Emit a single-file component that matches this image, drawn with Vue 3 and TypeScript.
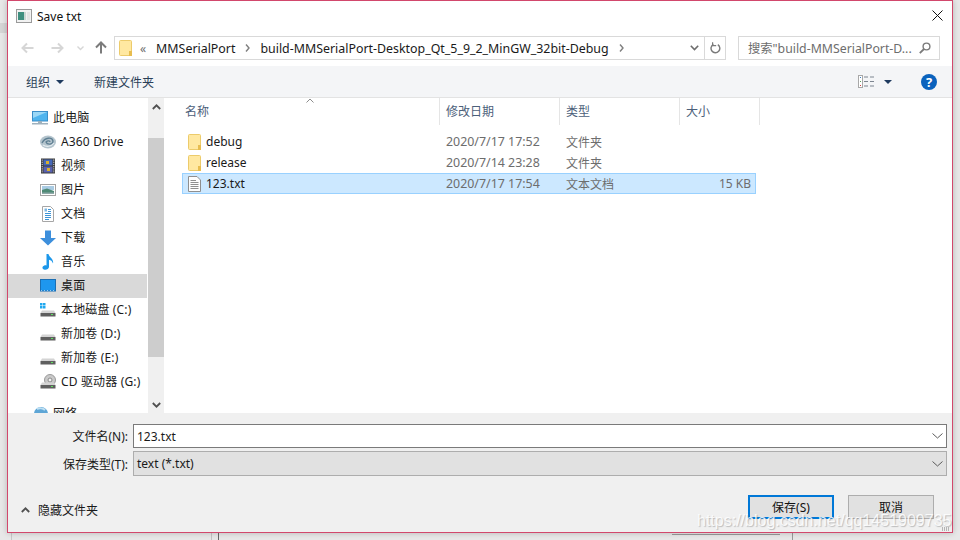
<template>
  <div class="desktop">
    <div class="behind-mark"></div>
    <div class="behind-line l1"></div>
    <div class="behind-line l2"></div>
    <div class="behind-line l3"></div>
    <div class="behind-line l4"></div>
    <div class="behind-box"></div>

    <div class="dialog">
      <div class="titlebar">
        <svg class="app-icon" width="16" height="14" viewBox="0 0 16 14">
          <rect x="0.5" y="0.5" width="15" height="13" fill="#f2f2f2" stroke="#9a9a9a" />
          <rect x="2" y="3" width="6" height="8" fill="#3f8f7f" />
          <rect x="8" y="3" width="2" height="8" fill="#c9d6d2" />
          <rect x="11" y="3" width="3" height="8" fill="#e4e4e4" />
        </svg>
        <span class="title">Save txt</span>
        <svg class="close" width="11" height="11" viewBox="0 0 11 11">
          <path d="M0.5 0.5L10.5 10.5M10.5 0.5L0.5 10.5" stroke="#111" stroke-width="1" fill="none" />
        </svg>
      </div>

      <div class="navrow">
        <svg class="nav-arrow" width="13" height="12" viewBox="0 0 13 12">
          <path d="M12.5 6H1.5M6 1.5L1.5 6L6 10.5" stroke="#d6d6d6" stroke-width="2" fill="none" />
        </svg>
        <svg class="nav-arrow fwd" width="13" height="12" viewBox="0 0 13 12">
          <path d="M0.5 6H11.5M7 1.5L11.5 6L7 10.5" stroke="#d6d6d6" stroke-width="2" fill="none" />
        </svg>
        <svg class="nav-small" width="7" height="5" viewBox="0 0 7 5">
          <path d="M0.5 0.5L3.5 3.5L6.5 0.5" stroke="#d6d6d6" stroke-width="1.4" fill="none" />
        </svg>
        <svg class="nav-up" width="12" height="13" viewBox="0 0 12 13">
          <path d="M6 12.5V2M1 6.5L6 1.5L11 6.5" stroke="#7b7b7b" stroke-width="2" fill="none" />
        </svg>

        <div class="address">
          <svg class="addr-folder" width="13" height="16" viewBox="0 0 13 16">
            <path d="M0.5 1.5Q0.5 0.5 1.5 0.5H11.5Q12.5 0.5 12.5 1.5V15.5H1.5Q0.5 15.5 0.5 14.5Z" fill="#ffe8a1" stroke="#eccb6b" />
            <rect x="10" y="11" width="3" height="5" fill="#e8bd4f" />
          </svg>
          <span class="crumb-more">«</span>
          <span class="crumb first">MMSerialPort</span>
          <svg class="crumb-sep" width="5" height="8" viewBox="0 0 5 8">
            <path d="M1 0.5L4 4L1 7.5" stroke="#7f7f7f" stroke-width="1.4" fill="none" />
          </svg>
          <span class="crumb">build-MMSerialPort-Desktop_Qt_5_9_2_MinGW_32bit-Debug</span>
          <svg class="crumb-sep" width="5" height="8" viewBox="0 0 5 8">
            <path d="M1 0.5L4 4L1 7.5" stroke="#7f7f7f" stroke-width="1.4" fill="none" />
          </svg>
          <svg class="addr-drop" width="9" height="6" viewBox="0 0 9 6">
            <path d="M0.8 0.8L4.5 4.5L8.2 0.8" stroke="#6d6d6d" stroke-width="1.6" fill="none" />
          </svg>
          <div class="addr-refresh">
            <svg width="11" height="12" viewBox="0 0 11 12">
              <path d="M7.8 2.6A4.4 4.4 0 1 1 3.4 2.4" stroke="#7a7a7a" stroke-width="1.4" fill="none" />
              <path d="M2.6 0.2V3.6H6.2" stroke="#7a7a7a" stroke-width="1.2" fill="none" />
            </svg>
          </div>
        </div>

        <div class="search">
          <span class="search-text">搜索"build-MMSerialPort-D...</span>
          <svg width="12" height="12" viewBox="0 0 12 12">
            <circle cx="7.5" cy="4.5" r="3.4" stroke="#7a7a7a" stroke-width="1.4" fill="none" />
            <path d="M5 7L0.8 11.2" stroke="#7a7a7a" stroke-width="1.8" />
          </svg>
        </div>
      </div>

      <div class="toolbar">
        <span class="tool-text">组织</span>
        <span class="caret-down"></span>
        <span class="tool-text new-folder">新建文件夹</span>
        <svg class="views" width="17" height="13" viewBox="0 0 17 13">
          <rect x="0.5" y="0.5" width="4" height="12" fill="#fff" stroke="#a8a8a8" />
          <rect x="2" y="2" width="1" height="1" fill="#3d7fc4" />
          <rect x="2" y="6" width="1" height="1" fill="#5aa05a" />
          <rect x="2" y="10" width="1" height="1" fill="#d04040" />
          <path d="M6 2H10M12 2H16M6 6.5H10M12 6.5H16M6 11H10M12 11H16" stroke="#7d8590" stroke-width="1" />
        </svg>
        <span class="caret-down views-caret"></span>
        <span class="help">?</span>
      </div>

      <div class="main">
        <div class="sidebar">
          <div
            v-for="item in navItems"
            :key="item.label"
            class="nav-item"
            :class="{ selected: item.selected, top: item.top, group: item.icon === 'network' }"
          >
            <svg class="nav-icon" width="16" height="16" viewBox="0 0 16 16">
              <template v-if="item.icon === 'pc'">
                <rect x="0.5" y="1.5" width="15" height="9.5" fill="#4fb4ee" stroke="#3b8ec9" />
                <path d="M1 2H15L1 8Z" fill="#9bd8f7" />
                <rect x="6" y="11" width="4" height="2" fill="#9fb1bd" />
                <rect x="0" y="13" width="16" height="1.5" fill="#9fb1bd" />
              </template>
              <template v-else-if="item.icon === 'a360'">
                <ellipse cx="8" cy="8" rx="8" ry="6.5" fill="#b4c4cd" />
                <path d="M2 9C5 3 12 3 13 7C13 11 7 11 6 8C8 6 10 7 10 8" stroke="#5f7f92" stroke-width="1.3" fill="none" />
                <path d="M3 11C6 13 11 13 14 9" stroke="#e6edf1" stroke-width="1.2" fill="none" />
              </template>
              <template v-else-if="item.icon === 'video'">
                <rect x="1" y="0.5" width="14" height="15" fill="#3a3a3a" />
                <rect x="3.5" y="1.5" width="9" height="6" fill="#4668b8" />
                <rect x="3.5" y="8.5" width="9" height="6" fill="#5a62b0" />
                <rect x="6" y="3" width="3" height="3" fill="#d8b030" />
                <rect x="7" y="10" width="3" height="3" fill="#d8b030" />
                <path d="M2.2 1.5V15M13.8 1.5V15" stroke="#ddd" stroke-width="1" stroke-dasharray="1.2 1" />
              </template>
              <template v-else-if="item.icon === 'pictures'">
                <rect x="0.5" y="2.5" width="15" height="11" fill="#fff" stroke="#a3a3a3" />
                <rect x="2" y="4" width="12" height="4" fill="#a9cbe3" />
                <path d="M2 8L7 6.5L14 9V12H2Z" fill="#4f8a76" />
                <path d="M2 10.5H14V12H2Z" fill="#8fa9a8" />
              </template>
              <template v-else-if="item.icon === 'docs'">
                <path d="M2.5 0.5H10.5L13.5 3.5V15.5H2.5Z" fill="#fff" stroke="#a6a6a6" />
                <path d="M8 3.5H11M8 5.5H11M5 7.5H11M5 9.5H11M5 11.5H11M5 13.5H9" stroke="#3d94d6" stroke-width="1" />
                <rect x="4.5" y="2.5" width="2.5" height="3" fill="#7fb7e0" />
              </template>
              <template v-else-if="item.icon === 'download'">
                <path d="M5 0.5H11V8H16L8 15.5L0 8H5Z" fill="#3d8fdc" />
              </template>
              <template v-else-if="item.icon === 'music'">
                <path d="M6.5 0H8.5C9 3.5 14 4.5 13 9.5C12.2 7 10.8 6.3 9 5.8V13C9 15 6 16.3 4 15.6C1.8 14.800 2 12.3 4.300 11.500C5.200 11.200 5.900 11.300 6.500 11.500Z" fill="#1c97ea" />
              </template>
              <template v-else-if="item.icon === 'desktop'">
                <rect x="0.5" y="1.5" width="15" height="11.5" fill="#1e97ef" stroke="#1c6fb3" />
                <path d="M1 12.5H15" stroke="#b8dcf6" stroke-width="0.8" stroke-dasharray="1 2" />
              </template>
              <template v-else-if="item.icon === 'network'">
                <circle cx="9" cy="8" r="7" fill="#5ea6d6" />
                <path d="M5 3C7 2 11 2 13 4" stroke="#bfe0f3" stroke-width="2" fill="none" />
                <rect x="0" y="12" width="16" height="2" fill="#4f8fc0" />
              </template>
              <template v-else>
                <g v-if="item.icon === 'cd'">
                  <circle cx="10" cy="6" r="5.5" fill="#c9c9c9" stroke="#9a9a9a" />
                  <circle cx="10" cy="6" r="2" fill="#f2f2f2" stroke="#8a8a8a" />
                </g>
                <g v-if="item.icon === 'sys'">
                  <rect x="0" y="1" width="2.5" height="2.5" fill="#1fa8ef" />
                  <rect x="3" y="1" width="2.5" height="2.5" fill="#1fa8ef" />
                  <rect x="0" y="4" width="2.5" height="2.5" fill="#1fa8ef" />
                  <rect x="3" y="4" width="2.5" height="2.5" fill="#1fa8ef" />
                </g>
                <path d="M2 8.5H14L15.5 11H0.5Z" fill="#d4d4d4" />
                <rect x="0.5" y="11" width="15" height="3.5" fill="#5f5f5f" />
                <rect x="11" y="12" width="2" height="1" fill="#5fe05f" />
              </template>
            </svg>
            <span class="nav-label">{{ item.label }}</span>
          </div>
        </div>

        <div class="scrollbar">
          <div class="scroll-btn">
            <svg width="9" height="6" viewBox="0 0 9 6">
              <path d="M0.8 5L4.5 1.3L8.2 5" stroke="#505050" stroke-width="1.8" fill="none" />
            </svg>
          </div>
          <div class="scroll-track"><div class="scroll-thumb"></div></div>
          <div class="scroll-btn">
            <svg width="9" height="6" viewBox="0 0 9 6">
              <path d="M0.8 1L4.5 4.7L8.2 1" stroke="#505050" stroke-width="1.8" fill="none" />
            </svg>
          </div>
        </div>

        <div class="filepane">
          <div class="col-header">
            <div class="col c-name">
              名称
              <svg class="sort" width="8" height="5" viewBox="0 0 8 5">
                <path d="M0.5 4.5L4 1L7.5 4.5" stroke="#8c8c8c" stroke-width="1" fill="none" />
              </svg>
            </div>
            <div class="col c-date">修改日期</div>
            <div class="col c-type">类型</div>
            <div class="col c-size">大小</div>
          </div>
          <div class="rows">
            <div
              v-for="file in files"
              :key="file.name"
              class="row"
              :class="{ active: file.active }"
            >
              <div class="cell-name">
                <svg v-if="file.folder" width="13" height="16" viewBox="0 0 13 16">
                  <path d="M0.5 1.5Q0.5 0.5 1.5 0.5H11.5Q12.5 0.5 12.5 1.5V15.5H1.5Q0.5 15.5 0.5 14.5Z" fill="#ffe8a1" stroke="#eccb6b" />
                  <rect x="10" y="11" width="3" height="5" fill="#e8bd4f" />
                </svg>
                <svg v-else width="13" height="16" viewBox="0 0 13 16">
                  <path d="M0.5 0.5H9L12.5 4V15.5H0.5Z" fill="#fdfdfd" stroke="#8f8f8f" />
                  <path d="M2.5 4.5H8M2.5 6.5H10.5M2.5 8.5H10.5M2.5 10.5H10.5M2.5 12.5H10.5" stroke="#8f8f8f" stroke-width="1" />
                </svg>
                <span>{{ file.name }}</span>
              </div>
              <div class="cell-date">{{ file.date }}</div>
              <div class="cell-type">{{ file.type }}</div>
              <div class="cell-size">{{ file.size }}</div>
            </div>
          </div>
        </div>
      </div>

      <div class="bottom">
        <div class="field">
          <label class="field-label">文件名(N):</label>
          <div class="input">
            <span>123.txt</span>
            <svg width="11" height="6" viewBox="0 0 11 6">
              <path d="M0.5 0.5L5.5 5L10.5 0.5" stroke="#5a5a5a" stroke-width="1" fill="none" />
            </svg>
          </div>
        </div>
        <div class="field second">
          <label class="field-label">保存类型(T):</label>
          <div class="input select">
            <span>text (*.txt)</span>
            <svg width="11" height="6" viewBox="0 0 11 6">
              <path d="M0.5 0.5L5.5 5L10.5 0.5" stroke="#5a5a5a" stroke-width="1" fill="none" />
            </svg>
          </div>
        </div>
        <div class="actions">
          <svg class="hide-caret" width="9" height="6" viewBox="0 0 9 6">
            <path d="M0.8 5L4.5 1.3L8.2 5" stroke="#505050" stroke-width="1.8" fill="none" />
          </svg>
          <span class="hide-text">隐藏文件夹</span>
          <button class="btn primary">保存(S)</button>
          <button class="btn">取消</button>
        </div>
      </div>
    </div>

    <div class="watermark">https://blog.csdn.net/qq1451909735</div>
    <div class="watermark-dots"></div>
  </div>
</template>

<script setup lang="ts">
interface NavItem {
  label: string;
  icon: string;
  top?: boolean;
  selected?: boolean;
}

interface FileRow {
  name: string;
  date: string;
  type: string;
  size: string;
  folder: boolean;
  active?: boolean;
}

const navItems: NavItem[] = [
  { label: "此电脑", icon: "pc", top: true },
  { label: "A360 Drive", icon: "a360" },
  { label: "视频", icon: "video" },
  { label: "图片", icon: "pictures" },
  { label: "文档", icon: "docs" },
  { label: "下载", icon: "download" },
  { label: "音乐", icon: "music" },
  { label: "桌面", icon: "desktop", selected: true },
  { label: "本地磁盘 (C:)", icon: "sys" },
  { label: "新加卷 (D:)", icon: "drive" },
  { label: "新加卷 (E:)", icon: "drive" },
  { label: "CD 驱动器 (G:)", icon: "cd" },
  { label: "网络", icon: "network", top: true },
];

const files: FileRow[] = [
  { name: "debug", date: "2020/7/17 17:52", type: "文件夹", size: "", folder: true },
  { name: "release", date: "2020/7/14 23:28", type: "文件夹", size: "", folder: true },
  { name: "123.txt", date: "2020/7/17 17:54", type: "文本文档", size: "15 KB", folder: false, active: true },
];
</script>

<style>
html,
body {
  margin: 0;
  background: #e6e6e6;
}
</style>

<style scoped>
.desktop {
  position: relative;
  width: 960px;
  height: 540px;
  overflow: hidden;
  background: #e8e8e8;
  font-family: "Noto Sans", "Noto Sans CJK SC", sans-serif;
  font-size: 12px;
  color: #1a1a1a;
}

.behind-mark {
  position: absolute;
  left: 0;
  top: 23px;
  width: 7px;
  height: 10px;
  background: #d6d6d6;
}
.behind-line {
  position: absolute;
  top: 533px;
  width: 1px;
  height: 7px;
}
.l1 {
  left: 11px;
  background: #c8c8c8;
}
.l2 {
  left: 211px;
  background: #c4c4c4;
}
.l3 {
  left: 218px;
  background: #666;
}
.l4 {
  left: 792px;
  background: #9a9a9a;
}
.behind-box {
  position: absolute;
  left: 672px;
  top: 534px;
  width: 108px;
  height: 1px;
  background: #9a9a9a;
}

.dialog {
  position: absolute;
  left: 7px;
  top: 0;
  width: 944px;
  height: 531px;
  border: 1px solid #d2486c;
  background: #fff;
  display: flex;
  flex-direction: column;
  box-shadow: 0 0 6px rgba(0, 0, 0, 0.22);
}

.titlebar {
  height: 29px;
  display: flex;
  align-items: center;
  padding-left: 8px;
  flex-shrink: 0;
}
.title {
  margin-left: 5px;
  margin-top: 1px;
  color: #111;
  font-size: 12px;
}
.close {
  margin-left: auto;
  margin-right: 9px;
}

.navrow {
  height: 36px;
  flex-shrink: 0;
  display: flex;
  align-items: flex-start;
  padding-top: 6px;
  box-sizing: border-box;
}
.nav-arrow {
  margin: 6px 0 0 13px;
}
.nav-arrow.fwd {
  margin-left: 17px;
}
.nav-small {
  margin: 10px 0 0 13px;
}
.nav-up {
  margin: 5px 0 0 11px;
}
.address {
  margin-left: 7px;
  width: 610px;
  height: 22px;
  border: 1px solid #d9d9d9;
  display: flex;
  align-items: center;
  flex-shrink: 0;
}
.addr-folder {
  margin-left: 4px;
}
.crumb-more {
  margin-left: 8px;
  color: #6d6d6d;
}
.crumb {
  margin-left: 10px;
  font-size: 12.4px;
  white-space: nowrap;
}
.crumb-sep {
  margin-left: 10px;
}
.crumb-sep + .crumb {
  margin-left: 10px;
}
.addr-drop {
  margin-left: auto;
  margin-right: 5px;
}
.addr-refresh {
  width: 20px;
  height: 100%;
  border-left: 1px solid #d9d9d9;
  display: flex;
  align-items: center;
  justify-content: center;
}
.search {
  margin-left: 12px;
  height: 22px;
  border: 1px solid #d9d9d9;
  display: flex;
  align-items: center;
  padding: 0 8px 0 9px;
  width: 183px;
  justify-content: space-between;
  color: #6d6d6d;
  font-size: 12.3px;
  flex-shrink: 0;
}
.search-text {
  white-space: nowrap;
}

.toolbar {
  height: 31px;
  flex-shrink: 0;
  background: #f4f5f7;
  border-bottom: 1px solid #e3e3e3;
  display: flex;
  align-items: center;
  padding-left: 18px;
}
.tool-text {
  color: #2a3f58;
}
.caret-down {
  margin-left: 6px;
  border-left: 4px solid transparent;
  border-right: 4px solid transparent;
  border-top: 4px solid #1f3a5f;
}
.new-folder {
  margin-left: 30px;
}
.views {
  margin-left: auto;
}
.views-caret {
  margin-left: 9px;
}
.help {
  margin-left: 29px;
  margin-right: 15px;
  width: 16px;
  height: 16px;
  border-radius: 50%;
  background: #0a62bd;
  color: #fff;
  font-weight: 700;
  font-size: 13px;
  line-height: 16px;
  text-align: center;
}

.main {
  flex: 1;
  min-height: 0;
  display: flex;
}
.sidebar {
  width: 139px;
  flex-shrink: 0;
  padding-top: 8px;
  box-sizing: border-box;
  overflow: hidden;
}
.nav-item {
  height: 24px;
  display: flex;
  align-items: center;
  padding-left: 32px;
  white-space: nowrap;
}
.nav-item.top {
  padding-left: 24px;
}
.nav-item.group {
  margin-top: 8px;
}
.nav-item.selected {
  background: #d9d9d9;
}
.nav-label {
  margin-left: 5px;
  margin-top: -2px;
  letter-spacing: 0.15px;
}
.scrollbar {
  width: 16px;
  flex-shrink: 0;
  margin-left: 1px;
  background: #f0f0f0;
  display: flex;
  flex-direction: column;
}
.scroll-btn {
  height: 17px;
  display: flex;
  align-items: center;
  justify-content: center;
  flex-shrink: 0;
}
.scroll-track {
  flex: 1;
  padding-top: 23px;
  box-sizing: border-box;
}
.scroll-thumb {
  height: 219px;
  background: #cdcdcd;
}

.filepane {
  flex: 1;
  min-width: 0;
}
.col-header {
  height: 27px;
  display: flex;
  color: #4c607a;
}
.col {
  position: relative;
  border-right: 1px solid #e5e5e5;
  display: flex;
  align-items: center;
  padding: 0 0 1px 6px;
  box-sizing: border-box;
}
.c-name {
  width: 276px;
  padding-left: 21px;
}
.c-date,
.c-type {
  width: 120px;
}
.c-size {
  width: 80px;
}
.sort {
  position: absolute;
  left: 142px;
  top: 0;
}
.rows {
  margin-left: 18px;
  margin-top: 6px;
  width: 574px;
  color: #6d6d6d;
}
.row {
  height: 21px;
  display: flex;
  align-items: center;
  box-sizing: border-box;
  border: 1px solid transparent;
}
.row.active {
  background: #cce8ff;
  border-color: #99d1ff;
}
.cell-name {
  width: 263px;
  padding-left: 5px;
  box-sizing: border-box;
  display: flex;
  align-items: center;
  gap: 5px;
  color: #1a1a1a;
}
.cell-date,
.cell-type {
  width: 120px;
}
.cell-date {
  font-size: 12.4px;
}
.cell-size {
  flex: 1;
  text-align: right;
  padding-right: 4px;
}

.bottom {
  height: 119px;
  flex-shrink: 0;
  background: #f0f0f0;
  padding: 11px 5px 0 0;
  box-sizing: border-box;
}
.field {
  display: flex;
  align-items: center;
}
.field.second {
  margin-top: 3px;
}
.field-label {
  width: 120px;
  text-align: right;
  margin-right: 5px;
  flex-shrink: 0;
  color: #1a1a1a;
}
.input {
  flex: 1;
  height: 24px;
  background: #fff;
  border: 1px solid #7a7a7a;
  box-sizing: border-box;
  display: flex;
  align-items: center;
  justify-content: space-between;
  padding: 0 3px 0 3px;
  font-size: 12px;
}
.input.select {
  height: 25px;
  background: #e1e1e1;
  border-color: #adadad;
}
.actions {
  display: flex;
  align-items: center;
  margin-top: 19px;
  padding-left: 13px;
}
.hide-text {
  margin-left: 8px;
  margin-top: 6px;
}
.hide-caret {
  flex-shrink: 0;
  margin-top: 6px;
}
.btn {
  width: 86px;
  height: 24px;
  box-sizing: border-box;
  background: #e1e1e1;
  border: 1px solid #adadad;
  font: inherit;
  color: #111;
  padding: 0;
}
.btn.primary {
  margin-left: auto;
  margin-right: 14px;
  border: 2px solid #0078d7;
}
.btn:last-child {
  margin-right: 13px;
}

.watermark {
  position: absolute;
  left: 697px;
  top: 511px;
  font-family: "Liberation Sans", Arial, sans-serif;
  font-size: 16px;
  line-height: 20px;
  color: rgba(255, 255, 255, 0.85);
  text-shadow: 1px 1px 1px rgba(110, 110, 110, 0.4);
  white-space: nowrap;
}
.watermark-dots {
  position: absolute;
  left: 942px;
  top: 527px;
  width: 7px;
  height: 4px;
  background: repeating-linear-gradient(90deg, #b5b5b5 0 1px, transparent 1px 2px);
}
</style>
